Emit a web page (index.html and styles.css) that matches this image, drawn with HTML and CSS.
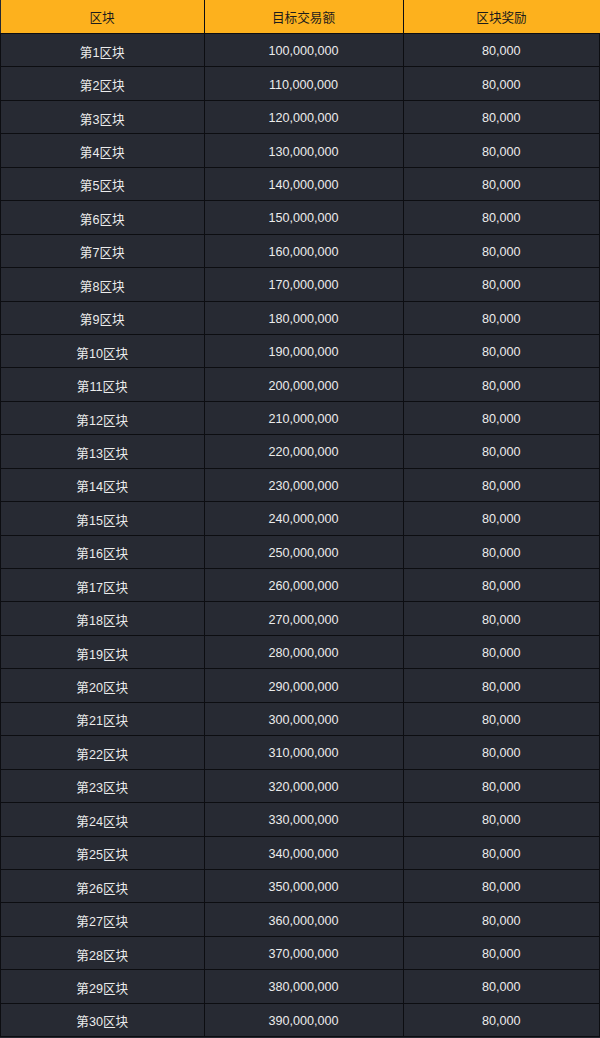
FILE: index.html
```html
<!DOCTYPE html>
<html lang="zh">
<head>
<meta charset="utf-8">
<link rel="stylesheet" href="styles.css">
</head>
<body>
<table class="tbl">
<thead>
<tr><th>区块</th><th>目标交易额</th><th>区块奖励</th></tr>
</thead>
<tbody>
<tr><td>第1区块</td><td>100,000,000</td><td>80,000</td></tr>
<tr><td>第2区块</td><td>110,000,000</td><td>80,000</td></tr>
<tr><td>第3区块</td><td>120,000,000</td><td>80,000</td></tr>
<tr><td>第4区块</td><td>130,000,000</td><td>80,000</td></tr>
<tr><td>第5区块</td><td>140,000,000</td><td>80,000</td></tr>
<tr><td>第6区块</td><td>150,000,000</td><td>80,000</td></tr>
<tr><td>第7区块</td><td>160,000,000</td><td>80,000</td></tr>
<tr><td>第8区块</td><td>170,000,000</td><td>80,000</td></tr>
<tr><td>第9区块</td><td>180,000,000</td><td>80,000</td></tr>
<tr><td>第10区块</td><td>190,000,000</td><td>80,000</td></tr>
<tr><td>第11区块</td><td>200,000,000</td><td>80,000</td></tr>
<tr><td>第12区块</td><td>210,000,000</td><td>80,000</td></tr>
<tr><td>第13区块</td><td>220,000,000</td><td>80,000</td></tr>
<tr><td>第14区块</td><td>230,000,000</td><td>80,000</td></tr>
<tr><td>第15区块</td><td>240,000,000</td><td>80,000</td></tr>
<tr><td>第16区块</td><td>250,000,000</td><td>80,000</td></tr>
<tr><td>第17区块</td><td>260,000,000</td><td>80,000</td></tr>
<tr><td>第18区块</td><td>270,000,000</td><td>80,000</td></tr>
<tr><td>第19区块</td><td>280,000,000</td><td>80,000</td></tr>
<tr><td>第20区块</td><td>290,000,000</td><td>80,000</td></tr>
<tr><td>第21区块</td><td>300,000,000</td><td>80,000</td></tr>
<tr><td>第22区块</td><td>310,000,000</td><td>80,000</td></tr>
<tr><td>第23区块</td><td>320,000,000</td><td>80,000</td></tr>
<tr><td>第24区块</td><td>330,000,000</td><td>80,000</td></tr>
<tr><td>第25区块</td><td>340,000,000</td><td>80,000</td></tr>
<tr><td>第26区块</td><td>350,000,000</td><td>80,000</td></tr>
<tr><td>第27区块</td><td>360,000,000</td><td>80,000</td></tr>
<tr><td>第28区块</td><td>370,000,000</td><td>80,000</td></tr>
<tr><td>第29区块</td><td>380,000,000</td><td>80,000</td></tr>
<tr><td>第30区块</td><td>390,000,000</td><td>80,000</td></tr>
</tbody>
</table>
</body>
</html>
```
FILE: styles.css
```css
html, body {
  margin: 0;
  padding: 0;
  background: #262831;
}
.tbl {
  width: 600px;
  border-collapse: collapse;
  table-layout: fixed;
  font-family: "Liberation Sans", "Noto Sans CJK SC", sans-serif;
  font-size: 12.6px;
}
.tbl th, .tbl td {
  border: 1px solid #0c0d11;
  text-align: center;
  padding: 0;
}
.tbl th {
  height: 33px;
  background: #fdb11d;
  color: #1c1c1c;
  font-weight: normal;
  border-top: none;
}
.tbl td {
  height: 30.45px;
  padding-top: 2px;
  background: #272a33;
  color: #ececec;
}
.tbl th:nth-child(1), .tbl td:nth-child(1) { width: 203px; }
.tbl th:nth-child(2), .tbl td:nth-child(2) { width: 198px; }
.tbl th:first-child { border-left: none; }
.tbl th:last-child { border-right: none; }
```
